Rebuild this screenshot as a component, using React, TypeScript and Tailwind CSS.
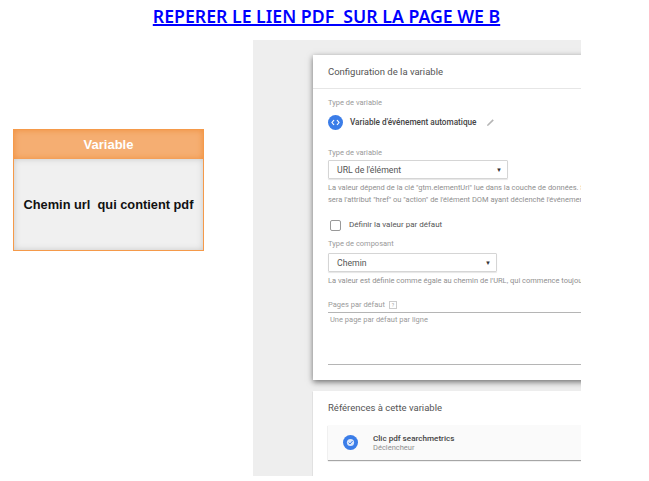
const CodeIcon = () => (
  <svg width="9" height="7" viewBox="0 0 9 7" fill="none" stroke="white" strokeWidth="1.2">
    <path d="M3 1 L1 3.5 L3 6" />
    <path d="M6 1 L8 3.5 L6 6" />
  </svg>
);

const TriggerIcon = () => (
  <svg width="9" height="9" viewBox="0 0 9 9">
    <circle cx="4.5" cy="4.5" r="3.6" fill="#dbe7fb" />
    <path d="M2.6 4.6 L4 6 L6.6 3" fill="none" stroke="#3b7de8" strokeWidth="1" />
  </svg>
);

const PencilIcon = () => (
  <svg width="9" height="9" viewBox="0 0 9 9" className="ml-[10px]">
    <path d="M1 8 L1.4 6.4 L6.6 1.2 L7.8 2.4 L2.6 7.6 Z" fill="#b5b5b5" />
  </svg>
);

const App = () => {
  return (
    <div className="w-[649px] h-[481px] bg-white overflow-hidden font-['Roboto',sans-serif]">
      <h1 className="h-[40px] pt-[5px] pl-[4px] text-center text-[17.7px] leading-[22px] font-semibold font-['Noto_Sans',sans-serif] text-[#0000ff] underline decoration-2 whitespace-pre">
        REPERER LE LIEN PDF  SUR LA PAGE WE B
      </h1>

      <div className="flex items-start pl-[13px]">
        <div className="mt-[89px] w-[191px] h-[122px] flex flex-col border border-[#f59a4a] font-['Liberation_Sans',sans-serif]">
          <div className="h-[29px] flex items-center justify-center bg-[#f5ae72] shadow-[inset_0_0_6px_#f08f3c] text-white text-[13px] font-bold">
            Variable
          </div>
          <div className="flex-1 flex items-center justify-center bg-[#f0f0f0] shadow-[inset_0_0_6px_#c8c8c8] text-[#111111] text-[12.8px] font-bold whitespace-pre">
            Chemin url  qui contient pdf
          </div>
        </div>

        <div className="ml-[49px] w-[328px] h-[436px] bg-[#eeeeee] overflow-hidden pl-[60px] pt-[15px] flex flex-col">
          <section className="w-[300px] h-[325px] shrink-0 bg-white shadow-[0_2px_6px_rgba(0,0,0,0.55)]">
            <div className="h-[34px] pl-[15px] pt-[2px] flex items-center border-b border-[#e6e6e6] text-[9.5px] text-[#555555] whitespace-nowrap">
              Configuration de la variable
            </div>
            <div className="pl-[15px] pt-[8px] text-[7.5px] text-[#9a9a9a] leading-[12px] whitespace-nowrap">
              <p>Type de variable</p>
              <div className="mt-[5px] flex items-center h-[16px]">
                <span className="w-[15px] h-[15px] rounded-full bg-[#3b7de8] flex items-center justify-center">
                  <CodeIcon />
                </span>
                <span className="ml-[7px] text-[8.2px] font-medium text-[#444444]">
                  Variable d'événement automatique
                </span>
                <PencilIcon />
              </div>
              <p className="mt-[17px]">Type de variable</p>
              <div className="mt-[1px] w-[180px] h-[19px] pl-[8px] pr-[5px] flex items-center justify-between border border-[#d5d5d5] rounded-[1px] text-[8.7px] text-[#555555] shadow-[0_1px_1px_rgba(0,0,0,0.1)]">
                URL de l'élément
                <span className="text-[6px] text-[#333333]">▼</span>
              </div>
              <p className="mt-[3px] text-[7.5px] text-[#8f8f8f]">
                La valeur dépend de la clé "gtm.elementUrl" lue dans la couche de données. Si
              </p>
              <p className="text-[7.5px] text-[#8f8f8f]">
                sera l'attribut "href" ou "action" de l'élément DOM ayant déclenché l'événement
              </p>
              <label className="mt-[13px] flex items-center text-[8px] text-[#555555]">
                <span className="ml-[2px] w-[11px] h-[11px] border border-[#999999] rounded-[2px]" />
                <span className="ml-[8px]">Définir la valeur par défaut</span>
              </label>
              <p className="mt-[7px]">Type de composant</p>
              <div className="mt-[3px] w-[169px] h-[19px] pl-[8px] pr-[5px] flex items-center justify-between border border-[#d5d5d5] rounded-[1px] text-[8.7px] text-[#555555] shadow-[0_1px_1px_rgba(0,0,0,0.1)]">
                Chemin
                <span className="text-[6px] text-[#333333]">▼</span>
              </div>
              <p className="mt-[3px] text-[7.5px] text-[#8f8f8f]">
                La valeur est définie comme égale au chemin de l'URL, qui commence toujours
              </p>
              <div className="mt-[12px] flex items-center pb-[1px] border-b border-[#b5b5b5]">
                Pages par défaut
                <span className="ml-[4px] w-[8px] h-[8px] border border-[#cccccc] text-[5px] leading-[6px] text-center">?</span>
              </div>
              <p className="h-[52px] pl-[2px] pt-[1px] border-b border-[#b5b5b5]">Une page par défaut par ligne</p>
            </div>
          </section>

          <section className="mt-[11px] w-[300px] h-[85px] shrink-0 bg-white shadow-[0_1px_1px_rgba(0,0,0,0.3)] pl-[15px] pt-[10px]">
            <p className="text-[9.5px] leading-[14px] text-[#555555]">Références à cette variable</p>
            <div className="mt-[10px] h-[35px] flex items-center pl-[15px] bg-[#fafafa] shadow-[0_1px_1px_rgba(0,0,0,0.35)]">
              <span className="w-[15px] h-[15px] rounded-full bg-[#3b7de8] flex items-center justify-center">
                <TriggerIcon />
              </span>
              <div className="ml-[15px] leading-[9px]">
                <p className="text-[8.1px] font-medium text-[#444444]">Clic pdf searchmetrics</p>
                <p className="text-[7.5px] text-[#8f8f8f]">Déclencheur</p>
              </div>
            </div>
          </section>
        </div>
      </div>
    </div>
  );
};

export default App;
